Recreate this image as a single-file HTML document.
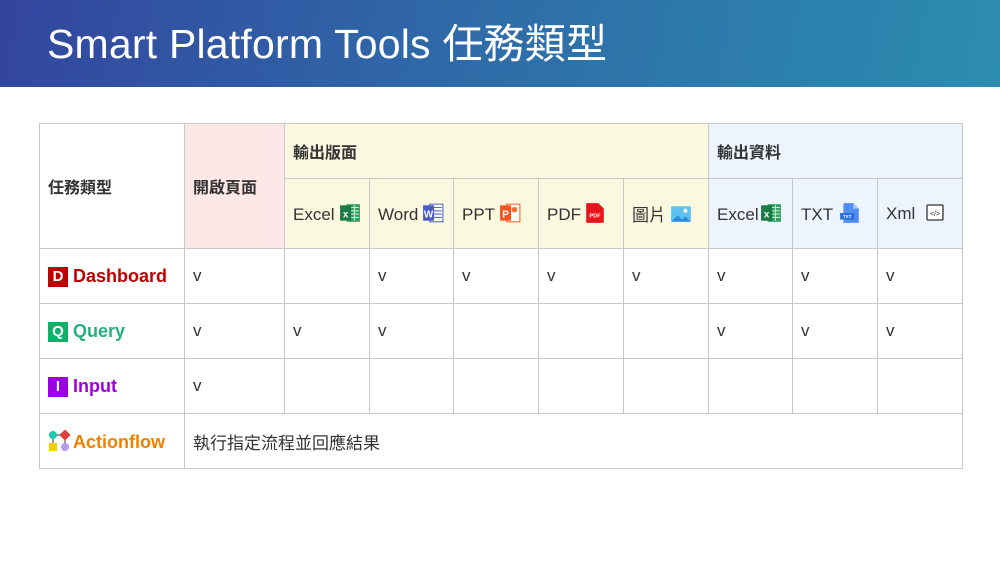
<!DOCTYPE html>
<html><head><meta charset="utf-8"><style>
*{margin:0;padding:0;box-sizing:border-box}
body{width:1000px;height:562px;background:#fff;font-family:"Liberation Sans","Noto Sans CJK TC",sans-serif;position:relative;overflow:hidden;color:#333}
.hd{position:absolute;left:0;top:0;width:1000px;height:87px;background:linear-gradient(100deg,#33459f 0%,#2f6aa8 45%,#2b8db0 100%)}
.hd h1{position:absolute;left:47px;top:19px;font-weight:normal;color:#fff;font-size:41px;line-height:50px;letter-spacing:0.2px}
table{position:absolute;left:39px;top:123px;border-collapse:collapse;table-layout:fixed;width:924px}
td{border:1px solid #c8c8c8;font-size:17px;padding:0 0 0 8px;vertical-align:middle;white-space:nowrap}
.b{font-weight:bold;font-size:16px}
.pk{background:#fde8e8}.yl{background:#faf8df}.bl{background:#eef4fd}
.ic{display:inline-block;vertical-align:-4px;margin-left:4px}
.tag{display:inline-block;width:20px;height:20px;color:#fff;font-weight:bold;font-size:15px;text-align:center;line-height:20px;margin-right:5px;vertical-align:1px}
.n{font-weight:bold;font-size:18px}
</style></head><body>
<div class="hd"><h1>Smart Platform Tools 任務類型</h1></div>
<table>
<colgroup><col style="width:145px"><col style="width:100px"><col style="width:85px"><col style="width:84px"><col style="width:85px"><col style="width:85px"><col style="width:85px"><col style="width:84px"><col style="width:85px"><col style="width:85px"></colgroup>
<tr style="height:55px"><td rowspan="2" class="b">任務類型</td><td rowspan="2" class="b pk">開啟頁面</td><td colspan="5" class="b yl">輸出版面</td><td colspan="3" class="b bl">輸出資料</td></tr>
<tr style="height:70px">
<td class="yl">Excel<svg class="ic" width="22" height="22" viewBox="0 0 20 20"><rect x="7" y="2" width="12" height="16" fill="#2e9e5f"/><path d="M11 5h7M11 8h7M11 11h7M11 14h7M14 3v14" stroke="#c8ead4" stroke-width="1"/><rect x="1" y="3" width="10" height="14" fill="#1a7a43"/><text x="6" y="14" font-size="9" fill="#fff" text-anchor="middle" font-family="Liberation Sans" font-weight="bold">x</text></svg></td>
<td class="yl">Word<svg class="ic" width="22" height="22" viewBox="0 0 20 20"><rect x="7" y="2" width="12" height="16" fill="#fff" stroke="#5868c8"/><path d="M11 5h7M11 8h7M11 11h7M11 14h7" stroke="#5868c8"/><rect x="1" y="3" width="10" height="14" fill="#4a5ac8"/><text x="6" y="14" font-size="9" fill="#fff" text-anchor="middle" font-family="Liberation Sans" font-weight="bold">W</text></svg></td>
<td class="yl">PPT<svg class="ic" width="22" height="22" viewBox="0 0 20 20"><rect x="7" y="2" width="12" height="16" fill="#fff" stroke="#f26a2a"/><circle cx="14" cy="7" r="2.5" fill="#f26a2a"/><rect x="1" y="3" width="10" height="14" fill="#f2551f"/><text x="6" y="14" font-size="9" fill="#fff" text-anchor="middle" font-family="Liberation Sans" font-weight="bold">P</text></svg></td>
<td class="yl">PDF<svg class="ic" width="20" height="22" viewBox="0 0 18 20"><path d="M2 1h10l5 5v12a1 1 0 0 1-1 1H2a1 1 0 0 1-1-1V2a1 1 0 0 1 1-1z" fill="#e8141a"/><text x="9" y="14" font-size="5" fill="#fff" text-anchor="middle" font-family="Liberation Sans" font-weight="bold">PDF</text></svg></td>
<td class="yl">圖片<svg class="ic" width="22" height="22" viewBox="0 0 20 20"><rect x="1" y="3" width="18" height="14" rx="1" fill="#5ec2f0"/><path d="M1 17l6-6 4 4 3-3 5 5z" fill="#2b8ee0"/><circle cx="14" cy="7" r="1.8" fill="#fff"/></svg></td>
<td class="bl">Excel<svg class="ic" width="22" height="22" viewBox="0 0 20 20" style="margin-left:1px"><rect x="7" y="2" width="12" height="16" fill="#2e9e5f"/><path d="M11 5h7M11 8h7M11 11h7M11 14h7M14 3v14" stroke="#c8ead4" stroke-width="1"/><rect x="1" y="3" width="10" height="14" fill="#1a7a43"/><text x="6" y="14" font-size="9" fill="#fff" text-anchor="middle" font-family="Liberation Sans" font-weight="bold">x</text></svg></td>
<td class="bl">TXT<svg class="ic" width="20" height="22" viewBox="0 0 18 20" style="margin-left:7px"><path d="M3 1h9l5 5v13H3z" fill="#4f8ef2"/><path d="M12 1v5h5z" fill="#a9c8f8"/><rect x="0" y="10" width="13" height="6" fill="#2f6fd8"/><text x="6.5" y="14.5" font-size="4" fill="#fff" text-anchor="middle" font-family="Liberation Sans" font-weight="bold">TXT</text></svg></td>
<td class="bl">Xml<svg class="ic" width="20" height="20" viewBox="0 0 20 20" style="margin-left:10px"><rect x="2" y="2" width="16" height="15" rx="1" fill="#fff" stroke="#333" stroke-width="1.3"/><text x="10" y="13" font-size="7" fill="#333" text-anchor="middle" font-family="Liberation Sans">&lt;/&gt;</text></svg></td>
</tr>
<tr style="height:55px"><td class="n" style="color:#c00000"><span class="tag" style="background:#c00000">D</span>Dashboard</td><td>v</td><td></td><td>v</td><td>v</td><td>v</td><td>v</td><td>v</td><td>v</td><td>v</td></tr>
<tr style="height:55px"><td class="n" style="color:#25b07a"><span class="tag" style="background:#0fb06a">Q</span>Query</td><td>v</td><td>v</td><td>v</td><td></td><td></td><td></td><td>v</td><td>v</td><td>v</td></tr>
<tr style="height:55px"><td class="n" style="color:#a000e0"><span class="tag" style="background:#9a00e0">I</span>Input</td><td>v</td><td></td><td></td><td></td><td></td><td></td><td></td><td></td><td></td></tr>
<tr style="height:55px"><td class="n" style="color:#f08000"><svg width="22" height="22" viewBox="0 0 22 22" style="vertical-align:-4px;margin-right:3px"><path d="M5 5h12M5 5v10M17 5v12" stroke="#555" stroke-width="1.2"/><circle cx="5" cy="5" r="4" fill="#1fc8b0"/><rect x="13" y="1" width="8" height="8" transform="rotate(45 17 5)" fill="#e04040"/><rect x="1" y="13" width="8" height="8" fill="#f5d000"/><circle cx="17" cy="17" r="4" fill="#b89af0"/></svg>Actionflow</td><td colspan="9">執行指定流程並回應結果</td></tr>
</table>
</body></html>
